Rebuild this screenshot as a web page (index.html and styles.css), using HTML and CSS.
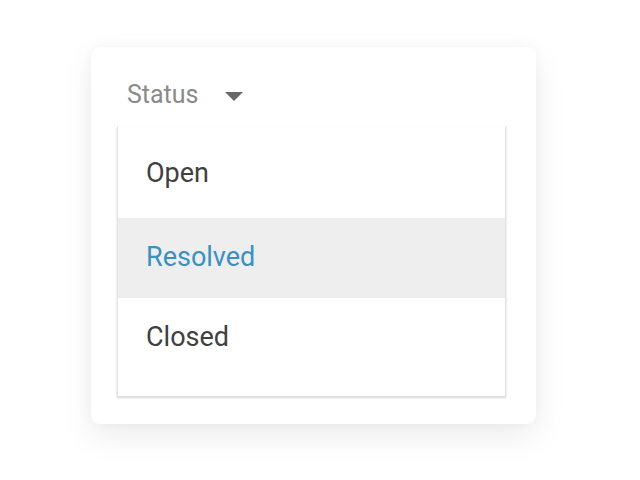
FILE: index.html
```html
<!DOCTYPE html>
<html>
<head>
<meta charset="utf-8">
<link rel="stylesheet" href="styles.css">
</head>
<body>
<div class="stage">
  <div class="card">
    <div class="select">
      <span class="select-label">Status</span>
      <span class="caret"></span>
    </div>
    <ul class="menu">
      <li class="item first">Open</li>
      <li class="item active">Resolved</li>
      <li class="item">Closed</li>
    </ul>
  </div>
</div>
</body>
</html>
```

FILE: styles.css
```css
html, body {
  margin: 0;
  padding: 0;
  background: #ffffff;
}
body {
  font-family: Roboto, "Liberation Sans", sans-serif;
  width: 640px;
  height: 480px;
  overflow: hidden;
}
.stage {
  padding: 47px 0 0 91px;
}
.card {
  width: 389px;
  padding: 33px 30px 27px 26px;
  background: #ffffff;
  border-radius: 9px;
  box-shadow: 0 12px 32px rgba(0, 0, 0, 0.08), 0 0 12px rgba(0, 0, 0, 0.03);
}
.select {
  display: flex;
  align-items: center;
  padding-left: 10px;
  height: 30px;
}
.select-label {
  font-size: 25px;
  line-height: 30px;
  color: #8a8a8a;
}
.caret {
  width: 0;
  height: 0;
  margin-left: 27px;
  margin-top: 3px;
  border-left: 9px solid transparent;
  border-right: 9px solid transparent;
  border-top: 9px solid #686868;
}
.menu {
  list-style: none;
  margin: 16px 0 0 0;
  padding: 0;
  height: 270px;
  overflow: hidden;
  background: #ffffff;
  border: 1px solid #e2e2e2;
  border-top: none;
  box-shadow: 0 1px 2px rgba(0, 0, 0, 0.18);
}
.item {
  font-size: 27px;
  line-height: 30px;
  font-weight: 400;
  color: #404040;
  padding: 24px 28px 26px 28px;
}
.item.first {
  padding-top: 32px;
  padding-bottom: 30px;
}
.item.active {
  background: #eeeeee;
  color: #3b90c2;
}
```
